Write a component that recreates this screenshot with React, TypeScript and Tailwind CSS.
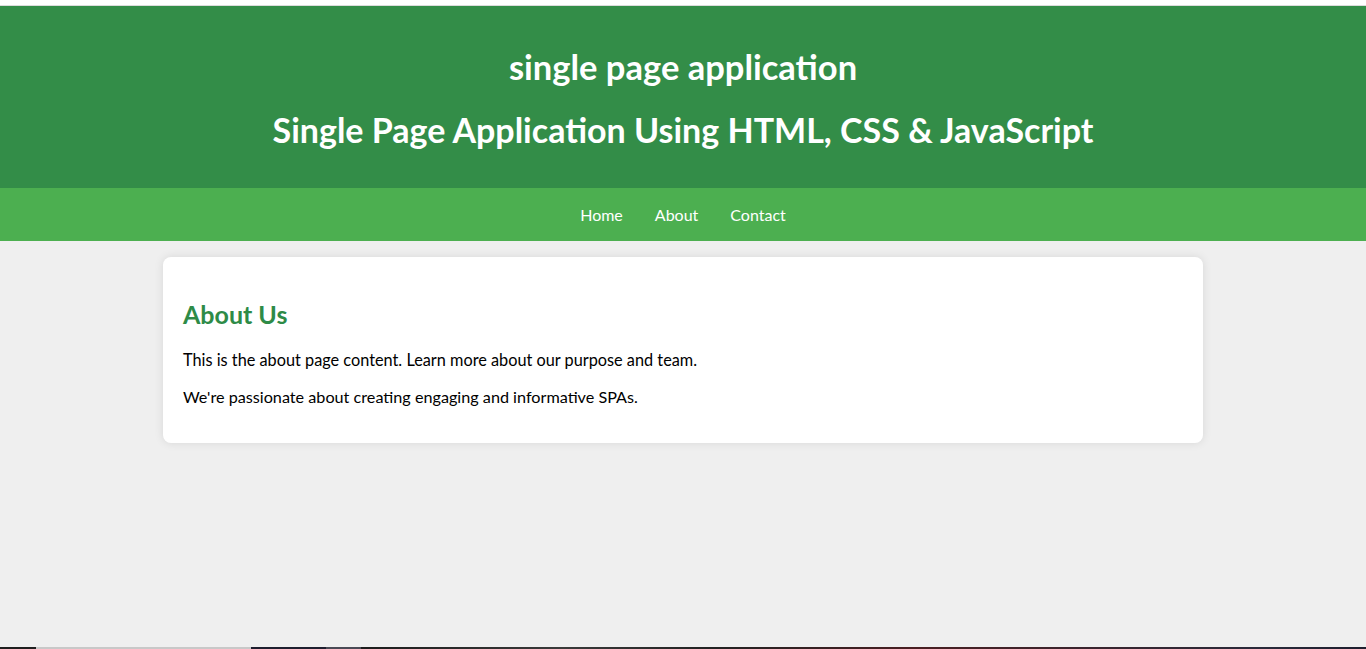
import React from "react";

export default function App() {
  return (
    <div
      className="h-[649px] w-full flex flex-col bg-[#efefef] overflow-hidden"
      style={{ fontFamily: "Lato, 'Noto Sans', sans-serif" }}
    >
      <div className="h-[6px] bg-white border-b border-[#dcdcdc] shrink-0" />
      <header className="h-[182px] shrink-0 bg-[#338d48] text-white flex flex-col items-center">
        <h1 className="mt-[42px] text-[34.5px] font-bold leading-[38px]">single page application</h1>
        <h2 className="mt-[25px] text-[34px] font-bold leading-[38px]">
          Single Page Application Using HTML, CSS &amp; JavaScript
        </h2>
      </header>
      <nav className="h-[53px] shrink-0 bg-[#4caf50] flex items-center justify-center gap-[32px] text-white text-[16px]">
        <a className="cursor-pointer">Home</a>
        <a className="cursor-pointer">About</a>
        <a className="cursor-pointer">Contact</a>
      </nav>
      <main className="flex-1 flex justify-center pt-[16px]">
        <section className="w-[1040px] h-[186px] bg-white rounded-[8px] shadow-[0_0_10px_rgba(0,0,0,0.1)] px-[20px] pt-[20px] text-black">
          <h2 className="mt-[21px] text-[25px] font-bold leading-[33px] text-[#2e8b47]">About Us</h2>
          <p className="mt-[18px] text-[16.3px] leading-[22px]">
            This is the about page content. Learn more about our purpose and team.
          </p>
          <p className="mt-[15px] text-[16.2px] leading-[22px]">
            We're passionate about creating engaging and informative SPAs.
          </p>
        </section>
      </main>
      <div className="h-[2px] shrink-0 flex">
        <div className="w-[36px] bg-[#1f1f1f]" />
        <div className="w-[215px] bg-[#c8c8c8]" />
        <div className="w-[75px] bg-[#1e1e2e]" />
        <div className="w-[35px] bg-[#4a4a55]" />
        <div className="flex-1 bg-[linear-gradient(90deg,#1c1c1c,#3a3a3a_20%,#222_35%,#4a1f22_55%,#2a2a3a_90%,#1e1e2e)]" />
      </div>
    </div>
  );
}
